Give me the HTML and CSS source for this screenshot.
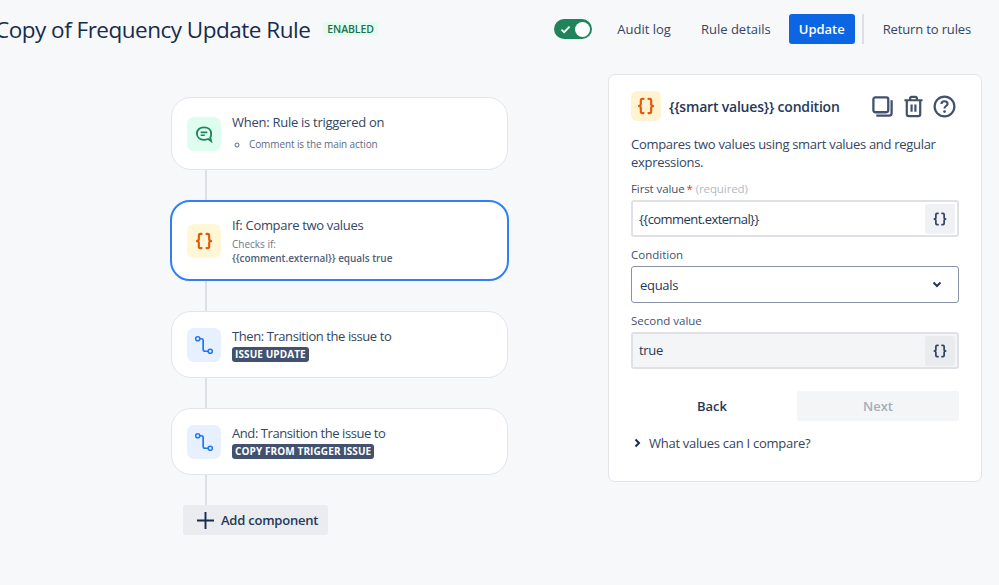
FILE: index.html
```html
<!DOCTYPE html>
<html lang="en">
<head>
<meta charset="utf-8">
<title>Copy of Frequency Update Rule</title>
<link rel="stylesheet" href="styles.css">
</head>
<body>
<svg class="defs" width="0" height="0" aria-hidden="true">
  <symbol id="braces" viewBox="0 0 24 24">
    <path d="M9 3.500H7.500C6.200 3.500 5.800 4.200 5.800 5.500V10C5.800 11.200 4.500 12 2.500 12C4.500 12 5.800 12.800 5.800 14V18.500C5.800 19.800 6.200 20.500 7.500 20.500H9M15 3.500H16.500C17.800 3.500 18.200 4.200 18.200 5.500V10C18.200 11.200 19.500 12 21.500 12C19.500 12 18.200 12.800 18.200 14V18.500C18.200 19.800 17.800 20.500 16.500 20.500H15" fill="none" stroke="currentColor" stroke-width="2.600" stroke-linecap="round"/>
  </symbol>
  <symbol id="route" viewBox="0 0 24 24">
    <circle cx="4.500" cy="4.500" r="2.500" fill="none" stroke="currentColor" stroke-width="1.800"/>
    <circle cx="19.500" cy="19.500" r="2.500" fill="none" stroke="currentColor" stroke-width="1.800"/>
    <path d="M7 4.500H9C10.500 4.500 11 5.500 11 6.500V17C11 18.500 11.800 19.500 13.500 19.500H17" fill="none" stroke="currentColor" stroke-width="2"/>
  </symbol>
</svg>
<header class="topbar">
  <div class="title-wrap">
    <h1 class="title">Copy of Frequency Update Rule</h1>
    <span class="lozenge">ENABLED</span>
  </div>
  <nav class="actions">
    <span class="toggle">
      <svg class="toggle-check" viewBox="0 0 12 10"><path d="M1.500 5.200L4.500 8L10.500 1.800" fill="none" stroke="#fff" stroke-width="2"/></svg>
      <span class="toggle-knob"></span>
    </span>
    <a class="link link-audit">Audit log</a>
    <a class="link link-details">Rule details</a>
    <button class="btn-primary">Update</button>
    <span class="divider"></span>
    <a class="link link-return">Return to rules</a>
  </nav>
</header>
<main class="main">
  <section class="flow">
    <article class="card card-when">
      <span class="tile tile-green">
        <svg class="tile-svg" viewBox="0 0 24 24"><path d="M12 4C7 4 3.500 7 3.500 11.500C3.500 16 7 19 12 19C14 19 15.500 18.500 17 18L20.500 20.500L19.500 16.500C20.500 15 20.800 13 20.500 11.500C20.500 7 17 4 12 4Z" fill="none" stroke="#1f845a" stroke-width="2.200"/><path d="M8 10H16M8 13.500H13" stroke="#1f845a" stroke-width="2"/></svg>
      </span>
      <div class="card-text">
        <div class="card-title title-when">When: Rule is triggered on</div>
        <ul class="card-list"><li>Comment is the main action</li></ul>
      </div>
    </article>
    <span class="line line-a"></span>
    <article class="card card-selected">
      <span class="tile tile-yellow"><svg class="tile-svg"><use href="#braces"/></svg></span>
      <div class="card-text">
        <div class="card-title title-if">If: Compare two values</div>
        <div class="card-sub">Checks if:</div>
        <div class="card-strong">{{comment.external}} equals true</div>
      </div>
    </article>
    <span class="line line-a"></span>
    <article class="card card-action">
      <span class="tile tile-blue"><svg class="tile-svg"><use href="#route"/></svg></span>
      <div class="card-text">
        <div class="card-title title-action">Then: Transition the issue to</div>
        <span class="tag">ISSUE UPDATE</span>
      </div>
    </article>
    <span class="line line-a"></span>
    <article class="card card-action">
      <span class="tile tile-blue"><svg class="tile-svg"><use href="#route"/></svg></span>
      <div class="card-text">
        <div class="card-title title-action">And: Transition the issue to</div>
        <span class="tag">COPY FROM TRIGGER ISSUE</span>
      </div>
    </article>
    <span class="line line-a"></span>
    <button class="btn-add">
      <svg class="plus" viewBox="0 0 18 18"><path d="M9 0V18M0 9H18" stroke="#172b4d" stroke-width="2"/></svg>
      Add component
    </button>
  </section>
  <aside class="panel">
    <div class="panel-head">
      <span class="tile-sm"><svg class="panel-braces"><use href="#braces"/></svg></span>
      <h2 class="panel-title">{{smart values}} condition</h2>
      <div class="panel-icons">
        <svg class="picon" viewBox="0 0 24 24"><rect x="2.500" y="2.500" width="15.500" height="15.500" rx="2" fill="none" stroke="#42526e" stroke-width="2.400"/><path d="M21.500 5.500V19C21.500 20.500 20.500 21.500 19 21.500H5.500" fill="none" stroke="#42526e" stroke-width="2.400"/></svg>
        <svg class="picon" viewBox="0 0 24 24"><path d="M2.500 5.500H21.500M8.500 5V3.500C8.500 2.500 9 2 10 2H14C15 2 15.500 2.500 15.500 3.500V5M5 6V20C5 21.200 5.800 22 7 22H17C18.200 22 19 21.200 19 20V6M10 10V17.500M14 10V17.500" fill="none" stroke="#42526e" stroke-width="2.300"/></svg>
        <svg class="picon" viewBox="0 0 24 24"><circle cx="12" cy="12" r="10.300" fill="none" stroke="#42526e" stroke-width="2.300"/><path d="M8.800 9.500C8.800 7.600 10.200 6.500 12 6.500C13.800 6.500 15.200 7.600 15.200 9.300C15.200 11.500 12 11.500 12 14" fill="none" stroke="#42526e" stroke-width="2.200"/><circle cx="12" cy="17.300" r="1.400" fill="#42526e"/></svg>
      </div>
    </div>
    <p class="panel-desc">Compares two values using smart values and regular expressions.</p>
    <label class="field-label">First value<span class="req">*</span> <span class="hint">(required)</span></label>
    <div class="input">
      <span class="input-text input-code">{{comment.external}}</span>
      <span class="smart-btn"><svg class="smart-icon"><use href="#braces"/></svg></span>
    </div>
    <label class="field-label">Condition</label>
    <div class="select">
      <span class="input-text">equals</span>
      <svg class="chev" viewBox="0 0 10 7"><path d="M1.500 1.500L5 5L8.500 1.500" fill="none" stroke="#253858" stroke-width="2"/></svg>
    </div>
    <label class="field-label">Second value</label>
    <div class="input input-muted">
      <span class="input-text">true</span>
      <span class="smart-btn"><svg class="smart-icon"><use href="#braces"/></svg></span>
    </div>
    <div class="panel-buttons">
      <button class="btn-back">Back</button>
      <button class="btn-next">Next</button>
    </div>
    <div class="disclosure">
      <svg class="disc-chev" viewBox="0 0 7 10"><path d="M1.500 1.500L5 5L1.500 8.500" fill="none" stroke="#172b4d" stroke-width="2"/></svg>
      What values can I compare?
    </div>
  </aside>
</main>
</body>
</html>
```
FILE: styles.css
```css
* { box-sizing: border-box; }
html, body { margin: 0; height: 100%; }
body {
  background: #f7f8fa;
  color: #253858;
  font-family: "Open Sans", "Noto Sans", "Liberation Sans", sans-serif;
  font-size: 13px;
  overflow: hidden;
  width: 999px;
  height: 585px;
}
.defs { display: block; height: 0; }

.topbar {
  height: 58px;
  display: flex;
  align-items: center;
  justify-content: space-between;
  padding-right: 28px;
}
.title-wrap { display: flex; align-items: center; margin: 2px 0 0 -5px; }
.title {
  margin: 0;
  font-size: 22.500px;
  font-weight: 400;
  line-height: 30px;
  color: #172b4d;
  letter-spacing: -0.500px;
  white-space: nowrap;
}
.lozenge {
  margin-left: 13px;
  margin-top: -3px;
  background: #e3fcef;
  color: #216e4e;
  font-size: 10.500px;
  font-weight: 600;
  line-height: 14px;
  padding: 0 4px;
  border-radius: 3px;
  letter-spacing: -0.100px;
}
.actions { display: flex; align-items: center; }
.toggle {
  width: 38px;
  height: 20px;
  border-radius: 10px;
  background: #1f845a;
  display: flex;
  align-items: center;
  justify-content: space-between;
  padding: 0 2px 0 6px;
  margin-right: 25px;
}
.toggle-check { width: 11px; height: 9px; }
.toggle-knob { width: 15px; height: 15px; border-radius: 50%; background: #fff; }
.link { font-size: 13px; color: #344563; white-space: nowrap; font-weight: 500; }
.link-audit { margin-right: 30px; }
.link-details { margin-right: 18px; }
.link-return { letter-spacing: -0.150px; }
.btn-primary {
  width: 66px;
  height: 30px;
  border: 0;
  border-radius: 3px;
  background: #0c66e4;
  color: #fff;
  font: 600 13px "Open Sans", sans-serif;
  padding: 0;
}
.divider { width: 2px; height: 30px; background: #dcdfe6; margin: 0 19px 0 7px; }

.main { display: flex; align-items: flex-start; padding-top: 16px; }
.flow {
  width: 337px;
  margin-left: 171px;
  margin-top: 23px;
  display: flex;
  flex-direction: column;
}
.card {
  display: flex;
  align-items: center;
  background: #fff;
  border: 1px solid #e3e5ea;
  border-radius: 20px;
  padding-left: 15px;
}
.card-when { height: 73px; }
.card-when .card-text { margin-bottom: 4px; }
.card-selected {
  height: 81px;
  border: 2px solid #2f80f5;
  margin: 0 -1px;
  padding-left: 15px;
}
.card-action { height: 67px; }
.tile {
  flex: none;
  width: 34px;
  height: 34px;
  border-radius: 7px;
  display: flex;
  align-items: center;
  justify-content: center;
  margin-right: 11px;
}
.tile-green { background: #dffcf0; }
.tile-yellow { background: #fff7d6; color: #e5590e; }
.tile-blue { background: #e6f0ff; color: #1f76f2; }
.tile-svg { width: 20px; height: 20px; }
.card-text { display: flex; flex-direction: column; align-items: flex-start; }
.card-title { font-size: 13px; line-height: 18px; color: #344563; white-space: nowrap; }
.title-when { letter-spacing: -0.270px; }
.title-if { letter-spacing: -0.320px; }
.title-action { letter-spacing: -0.420px; }
.card-list {
  margin: 6px 0 0;
  padding: 0 0 0 17px;
  font-size: 10px;
  line-height: 14px;
  color: #5e6c84;
  list-style: circle;
  letter-spacing: -0.100px;
}
.card-sub { font-size: 10px; line-height: 14px; color: #6b778c; margin-top: 3px; }
.card-strong { font-size: 10px; line-height: 14px; font-weight: 600; color: #505f79; letter-spacing: -0.050px; }
.tag {
  margin-top: 2px;
  background: #42526e;
  color: #fff;
  font-size: 10px;
  font-weight: 700;
  line-height: 15px;
  padding: 0 3px;
  border-radius: 3px;
  letter-spacing: 0.100px;
  white-space: nowrap;
}
.card-action .card-text { margin-top: -1px; }
.line { display: block; width: 2px; height: 30px; background: #dcdfe6; margin-left: 34px; }
.btn-add {
  align-self: flex-start;
  margin-left: 12px;
  width: 145px;
  height: 30px;
  border: 0;
  border-radius: 3px;
  background: #ebecf0;
  color: #253858;
  display: flex;
  align-items: center;
  padding: 0 0 0 14px;
  gap: 7px;
  font: 600 13px "Open Sans", sans-serif;
  letter-spacing: -0.230px;
}
.plus { width: 17px; height: 17px; }

.panel {
  margin-left: 100px;
  width: 374px;
  height: 408px;
  background: #fff;
  border: 1px solid #e3e5ea;
  border-radius: 7px;
  padding: 16px 22px 0;
}
.panel-head { display: flex; align-items: center; height: 30px; }
.tile-sm {
  width: 30px;
  height: 30px;
  border-radius: 6px;
  background: #fff3d1;
  color: #e5590e;
  display: flex;
  align-items: center;
  justify-content: center;
  margin-right: 8px;
}
.panel-braces { width: 20px; height: 20px; }
.panel-title { margin: 0; font-size: 14px; font-weight: 600; color: #253858; flex: 1; white-space: nowrap; letter-spacing: -0.200px; }
.panel-icons { display: flex; gap: 8px; margin-right: 3px; }
.picon { width: 23px; height: 23px; }
.panel-desc { margin: 14px 0 0; font-size: 13px; line-height: 18px; color: #344563; letter-spacing: -0.300px; }
.field-label { display: block; font-size: 11.500px; line-height: 16px; color: #42526e; font-weight: 500; margin-top: 10px; }
.panel-desc + .field-label { margin-top: 10px; letter-spacing: -0.100px; }
.req { color: #de350b; margin-left: 2px; }
.hint { color: #b3bac5; font-weight: 400; }
.input, .select {
  margin-top: 3px;
  height: 37px;
  border-radius: 3px;
  display: flex;
  align-items: center;
  justify-content: space-between;
}
.input { border: 2px solid #dfe1e6; background: #fff; padding: 0 2px 0 6px; }
.input-muted { background: #f4f5f7; }
.input-muted .input-text { margin-bottom: 2px; }
.select { border: 1px solid #8993a4; background: #fff; padding: 0 16px 0 8px; margin-top: 3px; }
.input-text { font-size: 13px; color: #253858; letter-spacing: -0.300px; }
.input-code { letter-spacing: -0.550px; }
.smart-btn {
  width: 30px;
  height: 30px;
  border-radius: 3px;
  background: #f0f1f4;
  display: flex;
  align-items: center;
  justify-content: center;
  color: #344563;
}
.input-muted .smart-btn { background: #e9ebee; }
.smart-icon { width: 16px; height: 16px; }
.chev { width: 10px; height: 7px; }
.panel-buttons { display: flex; margin-top: 22px; gap: 4px; }
.btn-back, .btn-next {
  width: 162px;
  height: 30px;
  border: 0;
  border-radius: 3px;
  padding: 0;
  font: 600 13px "Open Sans", sans-serif;
}
.btn-back { background: transparent; color: #253858; }
.btn-next { background: #f4f5f7; color: #a5adba; }
.disclosure { display: flex; align-items: center; margin-top: 13px; margin-left: 3px; gap: 8px; font-size: 13px; color: #344563; letter-spacing: -0.270px; }
.disc-chev { width: 7px; height: 10px; }
```
